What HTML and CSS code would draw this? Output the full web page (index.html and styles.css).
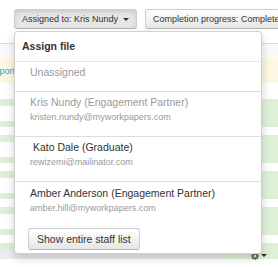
FILE: index.html
```html
<!DOCTYPE html>
<html lang="en">
<head>
    <meta charset="UTF-8">
    <title>Assign file</title>
    <link rel="stylesheet" href="styles.css">
</head>
<body>
    <div class="page">
        <div class="toolbar">
            <button class="btn btn-active">Assigned to: Kris Nundy <span class="caret"></span></button>
            <button class="btn">Completion progress: Complete <span class="caret"></span></button>
        </div>
        <div class="subbar"></div>

        <div class="row-warning"><a href="#">Report</a></div>

        <div class="rows">
            <div class="row"><div class="cell-box"></div></div>
            <div class="row"><div class="cell-box"></div></div>
            <div class="row"><div class="cell-box"></div></div>
            <div class="row"><div class="cell-box"></div></div>
            <div class="row row-last">
                <div class="cell-box cell-grey"></div>
                <span class="gear">
                    <svg width="8" height="8" viewBox="0 0 16 16"><path fill="#555" d="M7 0h2l.4 2.2 1.6.7 1.9-1.3 1.4 1.4-1.3 1.9.7 1.6L16 7v2l-2.2.4-.7 1.6 1.3 1.9-1.4 1.4-1.9-1.3-1.6.7L9 16H7l-.4-2.2-1.6-.7-1.9 1.3-1.4-1.4 1.3-1.9-.7-1.6L0 9V7l2.2-.4.7-1.6-1.3-1.9 1.4-1.4 1.9 1.3 1.6-.7zM8 5a3 3 0 100 6 3 3 0 000-6z"/></svg>
                    <span class="caret"></span>
                </span>
            </div>
        </div>

        <!-- assign dropdown, open over the table -->
        <div class="dropdown">
            <div class="dd-header">Assign file</div>
            <div class="dd-item dd-unassigned">Unassigned</div>
            <div class="dd-item dd-current">
                <div class="dd-name">Kris Nundy (Engagement Partner)</div>
                <div class="dd-email">kristen.nundy@myworkpapers.com</div>
            </div>
            <div class="dd-item">
                <div class="dd-name">&nbsp;Kato Dale (Graduate)</div>
                <div class="dd-email">rewizemi@mailinator.com</div>
            </div>
            <div class="dd-item dd-lastitem">
                <div class="dd-name">Amber Anderson (Engagement Partner)</div>
                <div class="dd-email">amber.hill@myworkpapers.com</div>
            </div>
            <div class="dd-footer">
                <button class="btn btn-staff">Show entire staff list</button>
            </div>
        </div>
    </div>
</body>
</html>
```

FILE: styles.css
```css
* {
    margin: 0;
    padding: 0;
    box-sizing: border-box;
}

body {
    font-family: "Liberation Sans", Arial, sans-serif;
    color: #333;
    background: #fff;
    overflow: hidden;
}

.page {
    position: relative;
    width: 278px;
    height: 267px;
    overflow: hidden;
}

.toolbar {
    display: flex;
    gap: 8px;
    padding: 9px 0 0 14px;
    height: 44px;
    border-bottom: 1px solid #ddd;
    white-space: nowrap;
}

.btn {
    font-family: inherit;
    font-size: 9px;
    color: #333;
    height: 20px;
    padding: 0 7px 0 7px;
    border: 1px solid #ccc;
    border-bottom-color: #b3b3b3;
    border-radius: 3px;
    background: linear-gradient(#fff, #e6e6e6);
    white-space: nowrap;
    flex-shrink: 0;
    display: flex;
    align-items: center;
}

.btn-active {
    background: #e6e6e6;
    box-shadow: inset 0 2px 4px rgba(0, 0, 0, 0.12);
}

.caret {
    display: inline-block;
    width: 0;
    height: 0;
    margin-left: 5px;
    border-top: 3px solid #333;
    border-left: 3px solid transparent;
    border-right: 3px solid transparent;
}

.subbar {
    height: 14px;
    background: #fafafa;
}

.row-warning {
    height: 25px;
    background: #fcf8e3;
    font-size: 9px;
    padding-top: 8px;
    text-indent: -12px;
    white-space: nowrap;
}

.row-warning a {
    color: #2a9fd6;
    text-decoration: none;
}

.rows {
    margin-top: 16px;
}

.row {
    display: flex;
    height: 28px;
    margin-bottom: 8px;
    padding: 7px 0 6px;
    background: #dff0d8;
}

.cell-box {
    width: 215px;
    height: 15px;
    background: #fff;
}

.row-last {
    height: 16px;
    padding: 7px 11px 0 0;
    align-items: flex-end;
}

.cell-grey {
    height: 9px;
    background: #ececf0;
}

.gear {
    display: flex;
    align-items: center;
    margin-left: auto;
    height: 7px;
}

.gear .caret {
    margin-left: 2px;
}

.dropdown {
    position: absolute;
    top: 31px;
    left: 14px;
    width: 248px;
    height: 223px;
    background: #fff;
    border: 1px solid rgba(0, 0, 0, 0.18);
    border-radius: 4px;
    box-shadow: 0 4px 10px rgba(0, 0, 0, 0.18);
}

.dd-header {
    font-size: 10.5px;
    font-weight: bold;
    line-height: 13px;
    padding: 8px 7px;
    border-bottom: 1px solid #e5e5e5;
}

.dd-item {
    padding: 4px 15px 13px;
    border-bottom: 1px solid #ddd;
}

.dd-unassigned {
    font-size: 10.5px;
    line-height: 13px;
    padding-bottom: 12px;
    color: #999;
}

.dd-name {
    font-size: 10.5px;
    line-height: 13px;
    white-space: nowrap;
}

.dd-current .dd-name {
    color: #999;
}

.dd-email {
    font-size: 9px;
    line-height: 11px;
    margin-top: 3px;
    color: #999;
}

.dd-lastitem {
    padding-top: 5px;
    padding-bottom: 0;
    border-bottom: none;
}

.dd-footer {
    padding: 14px 13px 0;
}

.btn-staff {
    font-size: 10.5px;
    height: 22px;
    padding: 0 8px;
}
```
